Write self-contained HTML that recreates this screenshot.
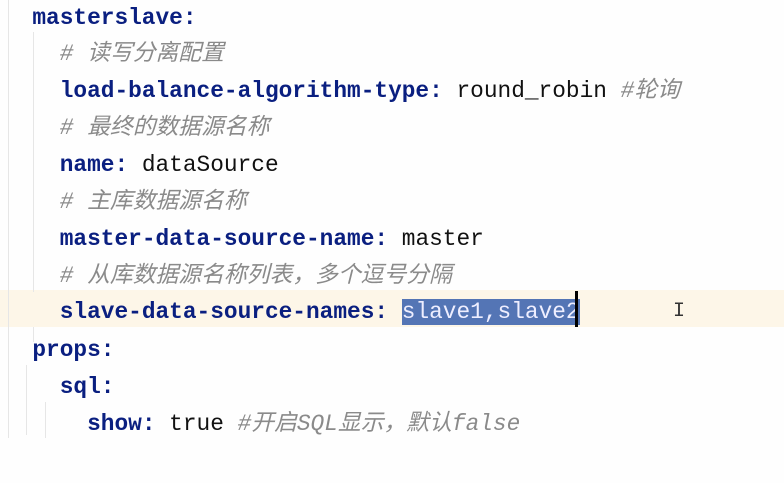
<!DOCTYPE html>
<html><head><meta charset="utf-8"><style>
html,body{margin:0;padding:0;background:#fefefe;width:784px;height:483px;overflow:hidden}
.l{position:absolute;left:5px;height:37px;line-height:37px;white-space:pre;font-family:"Liberation Mono","Noto Sans CJK SC",monospace;font-size:22.8px;color:#111;width:779px}
.k{color:#0a1f80;font-weight:bold}
.c{color:#8a8a8a;font-style:italic}
.g{position:absolute;width:1px;background:#e6e6e6}
.sel{background:#5475b5;color:#eef}
</style></head><body>
<div style="position:absolute;left:0;top:290px;width:784px;height:37px;background:#fdf6e8"></div>
<div class="g" style="left:8px;top:0;height:438px"></div>
<div class="g" style="left:33px;top:32px;height:260px"></div>
<div class="g" style="left:33px;top:327px;height:15px"></div>
<div class="g" style="left:26px;top:365px;height:70px"></div>
<div class="g" style="left:45px;top:402px;height:36px"></div>
<div class="l" style="top:0px"><span class="k">  masterslave:</span></div>
<div class="l" style="top:36px">    <span class="c"># 读写分离配置</span></div>
<div class="l" style="top:73px">    <span class="k">load-balance-algorithm-type:</span> round_robin <span class="c">#轮询</span></div>
<div class="l" style="top:110px">    <span class="c"># 最终的数据源名称</span></div>
<div class="l" style="top:147px">    <span class="k">name:</span> dataSource</div>
<div class="l" style="top:184px">    <span class="c"># 主库数据源名称</span></div>
<div class="l" style="top:221px">    <span class="k">master-data-source-name:</span> master</div>
<div class="l" style="top:258px">    <span class="c"># 从库数据源名称列表，多个逗号分隔</span></div>
<div class="l" style="top:294px">    <span class="k">slave-data-source-names:</span> <span class="sel">slave1,slave2</span></div>
<div style="position:absolute;left:575px;top:291px;width:3px;height:36px;background:#000"></div>
<div style="position:absolute;left:673px;top:300px;font-family:'Liberation Mono';font-size:20px;color:#333">I</div>
<div class="l" style="top:332px"><span class="k">  props:</span></div>
<div class="l" style="top:369px">    <span class="k">sql:</span></div>
<div class="l" style="top:406px">      <span class="k">show:</span> true <span class="c">#开启SQL显示，默认false</span></div>
</body></html>
